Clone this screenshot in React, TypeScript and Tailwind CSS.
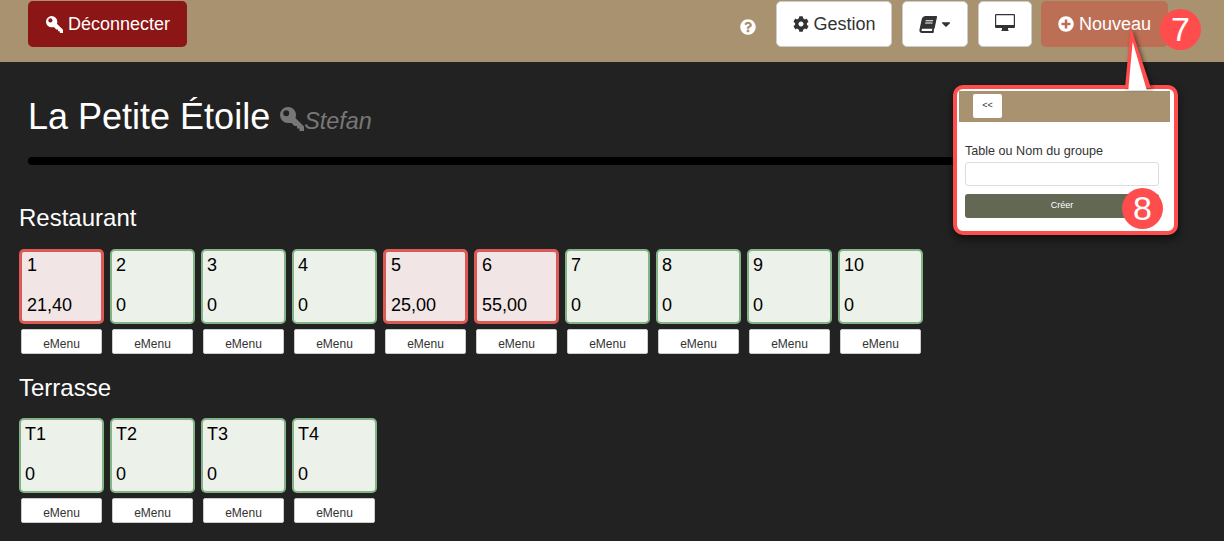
import { FaCog, FaBook, FaCaretDown, FaPlusCircle, FaQuestionCircle } from "react-icons/fa";

const Key = ({ className }: { className: string }) => (
  <svg className={className} viewBox="0 0 24 24" fill="currentColor">
    <path
      fillRule="evenodd"
      d="M8 0a8 8 0 0 1 8 8q0 1.5-.6 3L24 19.5V24h-4.5v-2.6H17v-2.5h-2.6l-2.9-2.9Q10 16 8 16A8 8 0 0 1 8 0ZM6.2 3.2a3 3 0 1 0 0 6 3 3 0 0 0 0-6Z"
    />
  </svg>
);

const Desktop = ({ className }: { className: string }) => (
  <svg className={className} viewBox="0 0 20 18" fill="currentColor">
    <path
      fillRule="evenodd"
      d="M1 0h18a1 1 0 0 1 1 1v12a1 1 0 0 1-1 1h-6v1.6l.6.7V17H6.400v-.7l.6-.7V14H1a1 1 0 0 1-1-1V1a1 1 0 0 1 1-1Zm.2 1.200V11h17.600V1.200Z"
    />
  </svg>
);

const Table = ({ name, value, busy }: { name: string; value: string; busy?: boolean }) => (
  <div className="flex w-[85px] flex-col items-center">
    <div
      className={
        busy
          ? "flex h-[75px] w-[85px] flex-col justify-between rounded-[5px] border-[3px] border-[#dc5a55] bg-[#f2e5e5] pb-[3px] pl-[5px] text-[18px] leading-[26px] text-black"
          : "flex h-[75px] w-[85px] flex-col justify-between rounded-[5px] border-[2px] border-[#82b487] bg-[#ecf1ea] pt-[1px] pb-[4px] pl-[4px] text-[18px] leading-[26px] text-black"
      }
    >
      <span>{name}</span>
      <span>{value}</span>
    </div>
    <button className="mt-[5px] h-[25px] w-[81px] rounded-[2px] border border-[#cccccc] bg-white pt-[4px] text-[12px] text-[#333333]">eMenu</button>
  </div>
);

const restaurant: [string, string, boolean][] = [
  ["1", "21,40", true],
  ["2", "0", false],
  ["3", "0", false],
  ["4", "0", false],
  ["5", "25,00", true],
  ["6", "55,00", true],
  ["7", "0", false],
  ["8", "0", false],
  ["9", "0", false],
  ["10", "0", false],
];

const Badge = ({ n, className }: { n: string; className: string }) => (
  <div className={"absolute flex h-[41px] w-[41px] items-center justify-center rounded-full bg-[#ff4d4d] text-[34px] text-white " + className}>{n}</div>
);

export default function App() {
  return (
    <div className="relative h-[541px] w-[1224px] overflow-hidden bg-[#222222] font-['Liberation_Sans',Arial,sans-serif]">
      <header className="flex h-[62px] items-start bg-[#a8926f] pt-[1px] pl-[28px]">
        <button className="flex h-[46px] w-[159px] items-center justify-center gap-[6px] rounded-[5px] bg-[#8c1515] text-[18px] text-white">
          <Key className="h-[17px] w-[17px] translate-x-[1px]" />
          Déconnecter
        </button>
        <FaQuestionCircle className="mt-[18px] ml-[553px] h-[16px] w-[16px] text-white" />
        <button className="ml-[20px] flex h-[46px] w-[116px] items-center justify-center gap-[5px] rounded-[5px] border border-[#cccccc] bg-white text-[18px] text-[#333333]">
          <FaCog className="h-[16px] w-[16px] translate-x-[1px]" />
          Gestion
        </button>
        <button className="ml-[10px] flex h-[46px] w-[66px] items-center justify-center gap-[5px] rounded-[5px] border border-[#cccccc] bg-white text-[#333333]">
          <FaBook className="h-[17px] w-[16px] -skew-x-12" />
          <FaCaretDown className="h-[14px] w-[10px]" />
        </button>
        <button className="ml-[10px] flex h-[46px] w-[54px] items-center justify-center rounded-[5px] border border-[#cccccc] bg-white text-[#333333]">
          <Desktop className="-mt-[3px] h-[18px] w-[20px]" />
        </button>
        <button className="ml-[9px] flex h-[46px] w-[127px] items-center justify-center gap-[5px] rounded-[5px] bg-[#bc6f55] text-[18px] text-white">
          <FaPlusCircle className="h-[16px] w-[16px]" />
          Nouveau
        </button>
      </header>

      <main className="pl-[19px]">
        <div className="ml-[9px] flex items-baseline pt-[33px]">
          <h1 className="text-[36px] leading-[44px] text-white">La Petite Étoile</h1>
          <Key className="ml-[10px] h-[24px] w-[24px] translate-y-[2px] self-center text-[#777777]" />
          <span className="text-[23.4px] text-[#777777] italic">Stefan</span>
        </div>
        <div className="mt-[18px] ml-[9px] h-[8px] w-[1000px] rounded-[4px] bg-black" />

        <h2 className="mt-[39px] text-[24px] leading-[28px] text-white">Restaurant</h2>
        <div className="mt-[17px] flex gap-[6px]">
          {restaurant.map(([n, v, b]) => (
            <Table key={n} name={n} value={v} busy={b} />
          ))}
        </div>

        <h2 className="mt-[20px] text-[24px] leading-[28px] text-white">Terrasse</h2>
        <div className="mt-[16px] flex gap-[6px]">
          {["T1", "T2", "T3", "T4"].map((n) => (
            <Table key={n} name={n} value="0" />
          ))}
        </div>
      </main>

      <div className="absolute top-[85px] left-[953px] h-[150px] w-[225px] rounded-[10px] border-[4px] border-[#ff4d4d] bg-white pt-[2px] shadow-[0_4px_10px_rgba(0,0,0,0.6)]">
        <div className="mr-[4px] ml-[2px] h-[31px] bg-[#a8926f] pt-[3px] pl-[14px]">
          <button className="block h-[24px] w-[29px] rounded-[2px] bg-white text-[9px] text-[#333333]">&lt;&lt;</button>
        </div>
        <div className="px-[8px]">
          <label className="mt-[22px] block text-[12.6px] leading-[15px] text-[#333333]">Table ou Nom du groupe</label>
          <input className="mt-[3px] block h-[24px] w-[194px] rounded-[3px] border border-[#dddddd] bg-white" />
          <button className="mt-[8px] block h-[24px] w-[194px] rounded-[3px] bg-[#626854] text-[9px] text-white">Créer</button>
        </div>
      </div>

      <svg className="absolute top-[20px] left-[1120px]" width="40" height="72" viewBox="0 0 40 72">
        <path className="drop-shadow-[2px_1px_2px_rgba(0,0,0,0.5)]" d="M10.700 6.700 L31 68 L5 68 Z" fill="#ff4d4d" />
        <path d="M12.700 21.700 L26.700 70 L8.300 70 Z" fill="#ffffff" />
      </svg>

      <Badge n="7" className="top-[9px] left-[1160px]" />
      <Badge n="8" className="top-[188px] left-[1122px]" />
    </div>
  );
}
